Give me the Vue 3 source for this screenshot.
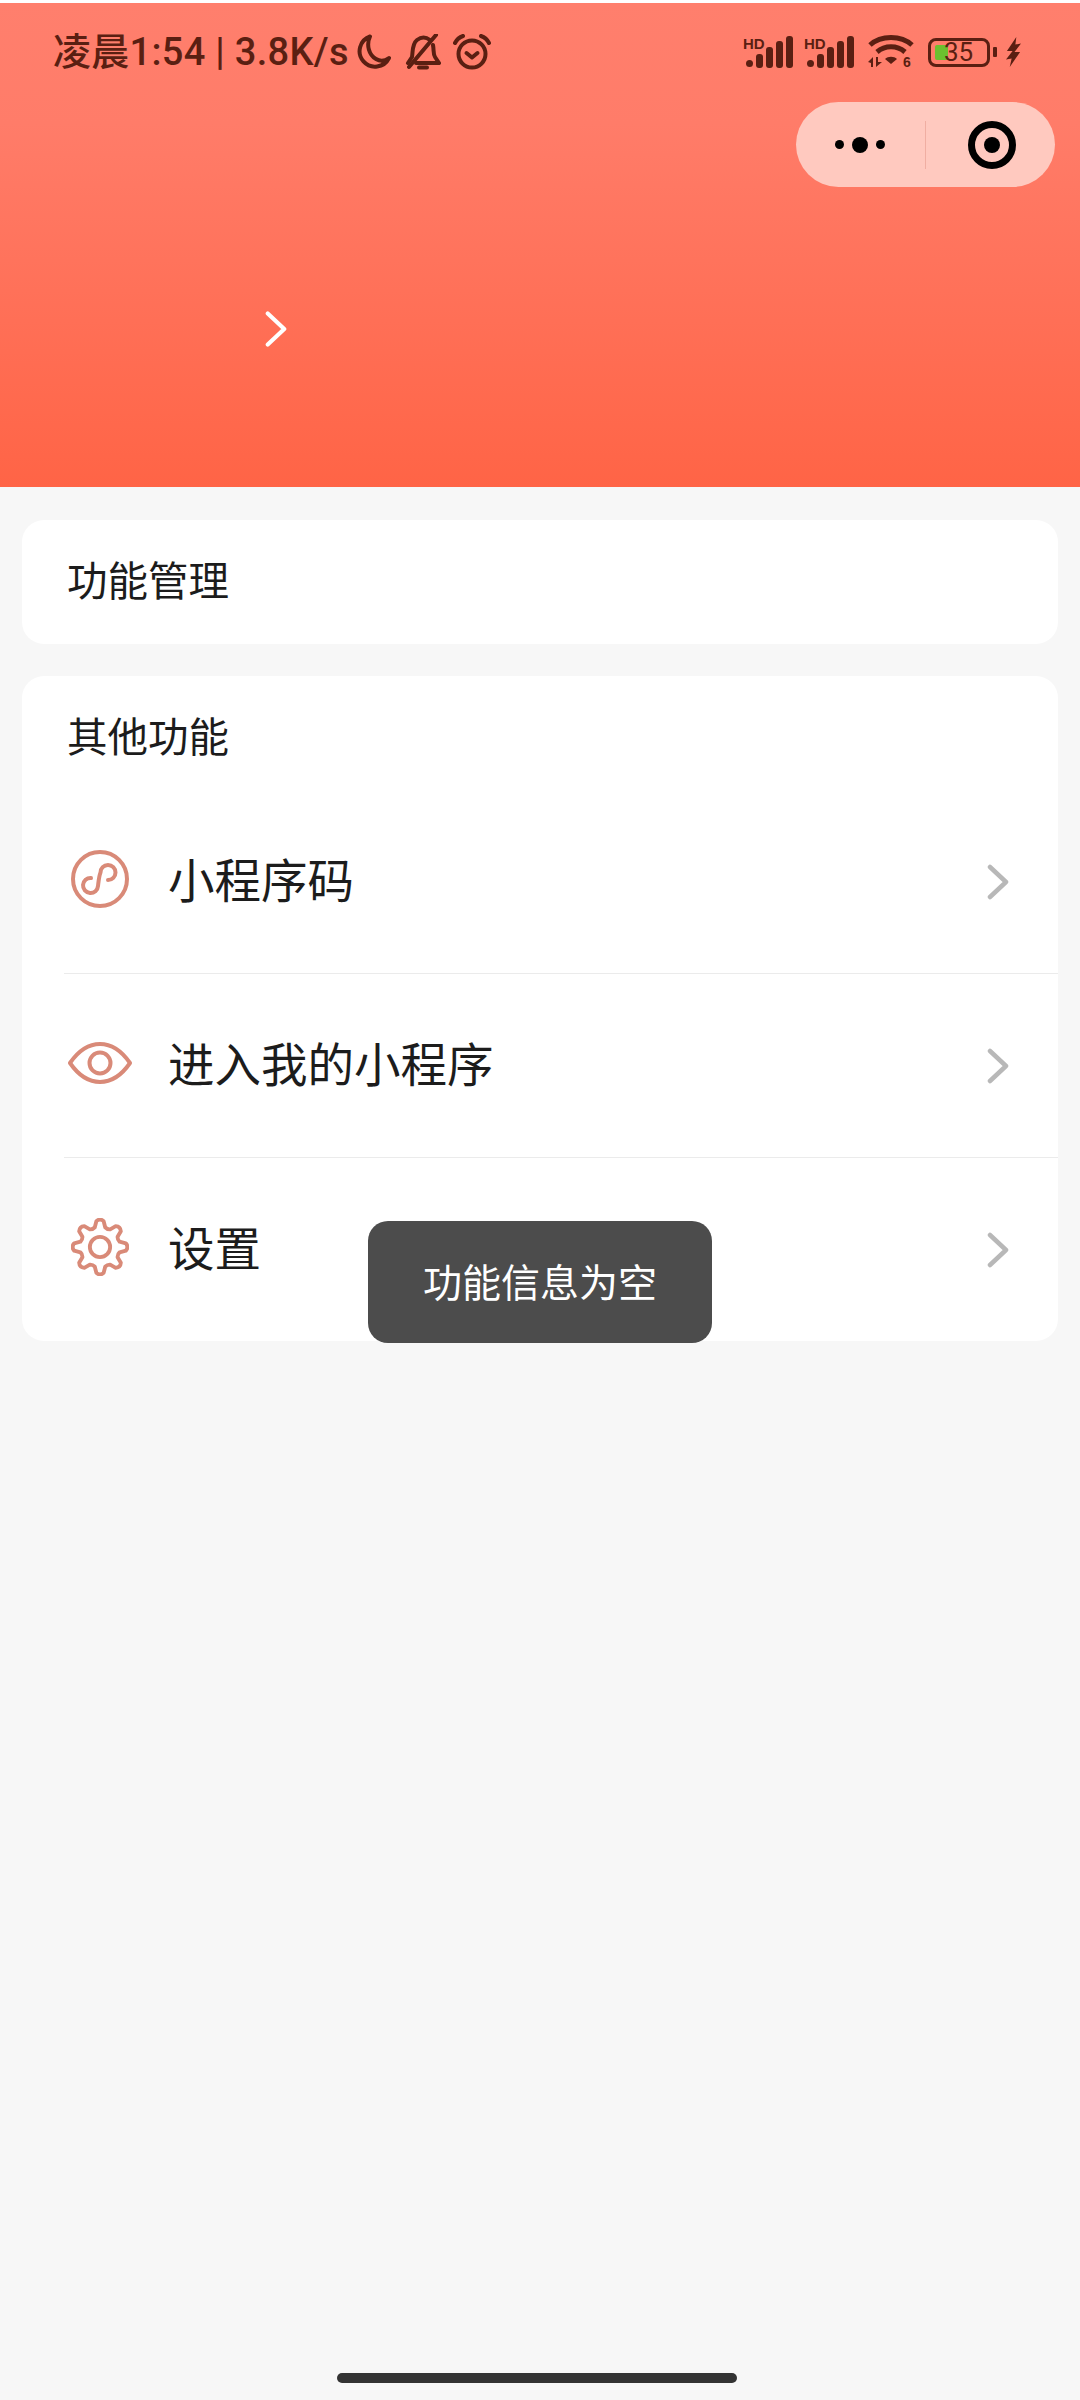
<template>
  <div class="page">
    <header class="hero">
      <div class="status-bar">
        <div class="status-left">
          <span class="status-text">凌晨1:54 | 3.8K/s</span>
          <svg class="ico moon" viewBox="0 0 36 36">
            <path d="M15 2.500 A15.500 15.500 0 1 0 34 24 C30 27 25 27.500 21 25 C14 21 11 11 15 2.500 Z" />
          </svg>
          <svg class="ico bell" viewBox="0 0 36 36">
            <path d="M3 29 L7 23 C8 17 7 10 12 6 C16 3 21 3 25 6 M28 11 C29 16 28 20 30 23 L34 29 L11 29" />
            <path d="M31 1 L4 33" />
            <path d="M14 33.500 H22" />
          </svg>
          <svg class="ico alarm" viewBox="0 0 38 36">
            <circle cx="19" cy="20" r="13.500" />
            <path d="M13.500 19 L19 23.500 L24.500 19" />
            <path d="M2 9 C4 5 7 3 10 2" />
            <path d="M36 9 C34 5 31 3 28 2" />
          </svg>
        </div>
        <div class="status-right">
          <svg v-for="n in 2" :key="n" class="signal" viewBox="0 0 50 32">
            <text x="0" y="13" class="hd">HD</text>
            <rect x="3" y="24" width="7" height="7" rx="3.500" />
            <rect x="13" y="18" width="7" height="14" rx="3" />
            <rect x="23" y="11" width="7" height="21" rx="3" />
            <rect x="33" y="5" width="7" height="27" rx="3" />
            <rect x="43" y="0" width="7" height="32" rx="3" />
          </svg>
          <svg class="wifi" viewBox="0 0 48 36">
            <path class="wifi-arc" d="M3 11 C14 1 34 1 45 11" />
            <path class="wifi-arc" d="M10 18 C18 11 30 11 38 18" />
            <path d="M18 25 C21 22 27 22 30 25 L24 30 Z" />
            <path d="M1 28 L6 23 V33 H4 V29 Z M9 33 V23 H11 V28 L15 28 Z" />
            <text x="36" y="32.500" class="six">6</text>
          </svg>
          <div class="battery-wrap">
            <div class="battery">
              <span class="battery-level"></span>
              <span class="battery-num">35</span>
            </div>
            <span class="battery-cap"></span>
          </div>
          <svg class="bolt" viewBox="0 0 18 32">
            <path d="M12 0 L2 15 L8 15 L1 24 L7 23 L5 32 L16 16 L10 16 L17 7 L11 8 Z" />
          </svg>
        </div>
      </div>

      <div class="capsule">
        <div class="capsule-more">
          <i class="dot"></i><i class="dot big"></i><i class="dot"></i>
        </div>
        <div class="capsule-line"></div>
        <div class="capsule-close">
          <i class="target"></i>
        </div>
      </div>

      <svg class="hero-arrow" viewBox="0 0 24 38">
        <path d="M3 2 L21 19 L3 36" />
      </svg>
    </header>

    <section class="card card-manage">
      <h3 class="card-title">功能管理</h3>
    </section>

    <section class="card card-other">
      <h3 class="card-title">其他功能</h3>
      <div v-for="item in items" :key="item.id" class="row">
        <div class="row-icon">
          <svg v-if="item.id === 'code'" class="line-ico" width="58" height="58" viewBox="0 0 58 58">
            <circle cx="29" cy="29" r="27" />
            <path d="M20 28 A7.500 7.500 0 1 0 27 36 C27.500 32 28 26 29.500 22.500 A7.500 7.500 0 1 1 37 30" />
          </svg>
          <svg v-else-if="item.id === 'eye'" class="line-ico" width="64" height="42" viewBox="0 0 64 42">
            <path d="M2 21 C11 8 21 2 32 2 S53 8 62 21 C53 34 43 40 32 40 S11 34 2 21 Z" />
            <circle cx="32" cy="21" r="10.500" />
          </svg>
          <svg v-else class="line-ico" width="58" height="58" viewBox="0 0 60 60">
            <path :d="gearPath" />
            <circle cx="30" cy="30" r="10.500" />
          </svg>
        </div>
        <span class="row-label">{{ item.label }}</span>
        <svg class="row-arrow" width="22" height="36" viewBox="0 0 22 36">
          <path d="M3 3 L19 18 L3 33" />
        </svg>
      </div>
    </section>

    <div class="toast"><span class="toast-text">功能信息为空</span></div>

    <div class="home-bar"></div>
  </div>
</template>

<script setup>
const items = [
  { id: 'code', label: '小程序码' },
  { id: 'eye', label: '进入我的小程序' },
  { id: 'gear', label: '设置' },
]

// 8 teeth, first one pointing up
const buildGear = () => {
  const pt = (r, deg) => {
    const a = ((deg - 90) * Math.PI) / 180
    return `${(30 + r * Math.cos(a)).toFixed(2)} ${(30 + r * Math.sin(a)).toFixed(2)}`
  }
  let d = ''
  for (let i = 0; i < 8; i++) {
    const c = i * 45
    d += `${i === 0 ? 'M' : 'L'}${pt(21, c - 15)} `
    d += `L${pt(27, c - 8)} `
    d += `Q${pt(30, c)} ${pt(27, c + 8)} `
    d += `L${pt(21, c + 15)} `
    d += `Q${pt(19.5, c + 22.5)} ${pt(21, c + 30)} `
  }
  return d + 'Z'
}
const gearPath = buildGear()
</script>

<style>
html, body {
  margin: 0;
  background: #fff;
}
</style>

<style scoped>
.page {
  position: relative;
  width: 1080px;
  height: 2400px;
  padding-top: 3px;
  box-sizing: border-box;
  background: #f7f7f7;
  display: flex;
  flex-direction: column;
  font-family: "Noto Sans CJK SC", "Noto Sans", sans-serif;
  overflow: hidden;
}
.page::before {
  content: '';
  position: absolute;
  top: 0;
  left: 0;
  right: 0;
  height: 3px;
  background: #fff;
}

.hero {
  position: relative;
  height: 484px;
  flex-shrink: 0;
  background: linear-gradient(180deg, #ff7f6d 0%, #ff7c69 25%, #ff6446 100%);
}
.status-bar {
  height: 98px;
  padding: 0 58px 0 53px;
  display: flex;
  align-items: center;
  justify-content: space-between;
  color: #5a1f12;
}
.status-left {
  display: flex;
  align-items: center;
}
.status-text {
  font-family: Roboto, "Noto Sans CJK SC", sans-serif;
  font-size: 38px;
  font-weight: 500;
  line-height: 44px;
  white-space: nowrap;
  letter-spacing: 0.3px;
}
.ico {
  fill: none;
  stroke: #5a1f12;
  stroke-width: 4;
  stroke-linecap: round;
  stroke-linejoin: round;
}
.moon {
  width: 36px;
  height: 36px;
  margin-left: 6px;
}
.bell {
  width: 36px;
  height: 36px;
  margin-left: 14px;
}
.alarm {
  width: 38px;
  height: 36px;
  margin-left: 12px;
}
.status-right {
  display: flex;
  align-items: center;
}
.signal {
  width: 50px;
  height: 32px;
  margin-right: 11px;
  fill: #5a1f12;
}
.hd {
  font-family: "Liberation Sans", sans-serif;
  font-size: 15px;
  font-weight: 700;
}
.wifi {
  width: 48px;
  height: 36px;
  margin-left: 2px;
  fill: #5a1f12;
}
.wifi-arc {
  fill: none;
  stroke: #5a1f12;
  stroke-width: 5;
}
.six {
  font-family: "Liberation Sans", sans-serif;
  font-size: 14px;
  font-weight: 700;
}
.battery-wrap {
  display: flex;
  align-items: center;
  margin-left: 13px;
}
.battery {
  position: relative;
  width: 62px;
  height: 29px;
  box-sizing: border-box;
  border: 3px solid #5a1f12;
  border-radius: 8px;
}
.battery-level {
  position: absolute;
  left: 4px;
  top: 4px;
  width: 13px;
  height: 15px;
  background: #6cc02f;
  border-radius: 2px;
}
.battery-num {
  position: absolute;
  left: 13px;
  top: -3px;
  font-family: Roboto, sans-serif;
  font-size: 26px;
  line-height: 29px;
  color: #5a1f12;
}
.battery-cap {
  width: 4px;
  height: 10px;
  margin-left: 3px;
  background: #5a1f12;
  border-radius: 1px;
}
.bolt {
  width: 17px;
  height: 30px;
  margin-left: 8px;
  fill: #5a1f12;
}

.capsule {
  position: absolute;
  top: 99px;
  right: 25px;
  width: 259px;
  height: 85px;
  border-radius: 43px;
  background: #ffc9bf;
  display: flex;
  align-items: center;
}
.capsule-more {
  width: 129px;
  display: flex;
  align-items: center;
  justify-content: center;
  gap: 8px;
  padding-right: 2px;
  box-sizing: border-box;
}
.dot {
  width: 9px;
  height: 9px;
  border-radius: 50%;
  background: #000;
}
.dot.big {
  width: 16px;
  height: 16px;
}
.capsule-line {
  width: 1px;
  height: 48px;
  background: #f0aea2;
}
.capsule-close {
  flex: 1;
  display: flex;
  align-items: center;
  justify-content: center;
  padding-left: 3px;
}
.target {
  width: 48px;
  height: 48px;
  box-sizing: border-box;
  border: 7px solid #000;
  border-radius: 50%;
  display: flex;
  align-items: center;
  justify-content: center;
}
.target::after {
  content: '';
  width: 16px;
  height: 16px;
  border-radius: 50%;
  background: #000;
}

.hero-arrow {
  display: block;
  width: 22px;
  height: 38px;
  margin: 209px 0 0 265px;
  fill: none;
  stroke: #fff;
  stroke-width: 4.5;
  stroke-linecap: round;
  stroke-linejoin: round;
}

.card {
  margin: 0 22px;
  background: #fff;
  border-radius: 22px;
  flex-shrink: 0;
}
.card-manage {
  margin-top: 33px;
  height: 124px;
  padding-left: 45px;
  padding-bottom: 7px;
  box-sizing: border-box;
  display: flex;
  align-items: center;
}
.card-other {
  margin-top: 32px;
  padding-top: 33px;
}
.card-title {
  margin: 0;
  font-size: 40.5px;
  line-height: 52px;
  font-weight: 400;
  color: #1c1c1c;
}
.card-other .card-title {
  margin-left: 45px;
  margin-bottom: 28px;
}
.row {
  height: 184px;
  margin-left: 42px;
  padding-right: 49px;
  display: flex;
  align-items: center;
  border-top: 1px solid #ebebeb;
  box-sizing: border-box;
}
.card-title + .row {
  border-top-color: transparent;
}
.row-icon {
  width: 72px;
  margin-bottom: 5px;
  display: flex;
  justify-content: center;
}
.line-ico {
  display: block;
  fill: none;
  stroke: #d98a78;
  stroke-width: 4;
  stroke-linecap: round;
  stroke-linejoin: round;
}
.row-label {
  flex: 1;
  margin-left: 32px;
  margin-bottom: 8px;
  font-size: 46.5px;
  line-height: 60px;
  color: #1c1c1c;
}
.row-arrow {
  fill: none;
  stroke: #b8b8b8;
  stroke-width: 4.5;
  stroke-linecap: round;
  stroke-linejoin: round;
}

.toast {
  position: absolute;
  left: 368px;
  top: 1221px;
  width: 344px;
  height: 122px;
  border-radius: 20px;
  background: #4c4c4c;
  color: #fff;
  font-size: 39px;
  display: flex;
  align-items: center;
  justify-content: center;
}
.toast-text {
  margin-bottom: 5px;
}

.home-bar {
  width: 400px;
  height: 10px;
  margin: auto 0 17px 337px;
  border-radius: 5px;
  background: #333;
  flex-shrink: 0;
}
</style>
